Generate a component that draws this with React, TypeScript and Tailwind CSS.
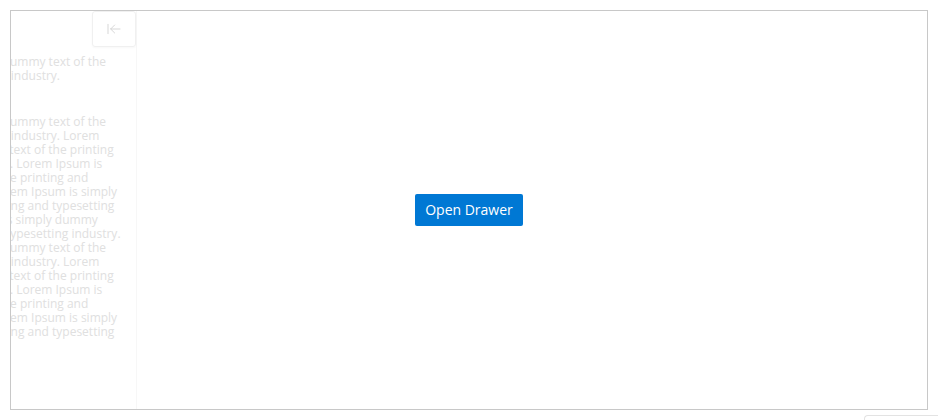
import { ArrowLeftToLine } from "lucide-react";

const sentence = "Lorem Ipsum is simply dummy text of the printing and typesetting industry.";

const introLines = ["Lorem Ipsum is simply dummy text of the", "printing and typesetting industry."];

const cycle = [
  "Lorem Ipsum is simply dummy text of the",
  "printing and typesetting industry. Lorem",
  "Ipsum is simply dummy text of the printing",
  "and typesetting industry. Lorem Ipsum is",
  "simply dummy text of the printing and",
  "typesetting industry. Lorem Ipsum is simply",
  "dummy text of the printing and typesetting",
  "industry. Lorem Ipsum is simply dummy",
  "text of the printing and typesetting industry.",
];

const bodyLines = [...cycle, ...cycle.slice(0, 7), "industry."];

function Lines({ lines }: { lines: string[] }) {
  return (
    <p className="whitespace-nowrap">
      {lines.map((line, i) => (
        <span key={i} className="block">
          {line}
        </span>
      ))}
    </p>
  );
}

export default function App() {
  return (
    <div
      className="h-[420px] w-[938px] overflow-hidden bg-white p-[10px]"
      style={{ fontFamily: '"Open Sans", "Liberation Sans", sans-serif' }}
    >
      <div className="relative h-[400px] w-[918px] overflow-hidden border border-[#c8c8c8]">
        <div className="flex h-full items-center justify-center">
          <button
            type="button"
            className="h-8 rounded-[2px] bg-[#0078d4] px-[10px] pb-px text-[14px] text-white"
          >
            Open Drawer
          </button>
        </div>

        {/* drawer, mid-way through closing */}
        <aside
          aria-label={sentence}
          className="absolute inset-y-0 left-0 w-[280px] -translate-x-[154px] border-r border-[#f7f7f7] bg-white"
        >
          <div className="flex h-9 justify-end">
            <button
              type="button"
              aria-label="Close drawer"
              className="grid h-9 w-[44px] place-items-center rounded-[3px] border border-[#f0f0f0] shadow-[0_1px_2px_rgba(0,0,0,0.03)]"
            >
              <ArrowLeftToLine size={16} strokeWidth={1.25} className="text-[#cfcfcf]" />
            </button>
          </div>
          <div className="pl-[17px] pr-5 pt-2 text-[12px] leading-[14px] text-[#e0e0e0]">
            <Lines lines={introLines} />
            <div className="mt-[32px]">
              <Lines lines={bodyLines} />
            </div>
          </div>
        </aside>
      </div>
      <div className="mt-[5px] flex justify-end">
        <div className="-mr-[10px] h-[5px] w-[74px] rounded-tl-[4px] border-l border-t border-[#e3e3e3]" />
      </div>
    </div>
  );
}
